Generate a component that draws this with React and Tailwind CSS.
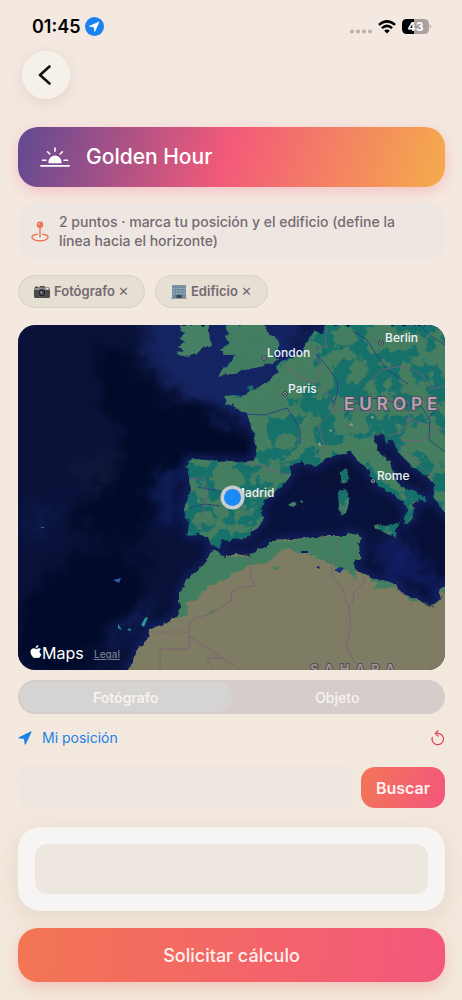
import React, { useState } from 'react'

const EUROPE = 'M325 325L320 334L314 331L309 337L304 345L300 353L290 358L280 361L276 367L278 375L270 381L260 385L253 389L251 385L247 387L250 394L253 396L244 398L237 395L223 396L226 401L224 404L235 406L245 413L250 422L253 433L256 447L253 460L240 463L230 461L217 462L205 460L193 459L186 463L187 472L190 490L183 509L184 517L188 520L187 535L197 534L207 537L210 545L217 548L222 540L230 539L245 538L250 532L257 528L263 517L260 510L263 502L273 493L281 487L290 475L290 467L295 462L305 463L315 467L325 458L332 456L340 451L350 452L358 462L365 467L372 480L380 488L393 494L402 503L407 511L402 523L407 523L413 515L411 505L418 499L424 502L425 498L415 492L405 489L396 482L392 473L388 463L375 453L371 442L374 436L382 434L386 443L391 439L398 453L412 467L425 476L434 484L433 497L440 508L446 514V325Z'
const BRITAIN = 'M228 325L225 329L230 335L224 336L229 343L219 351L224 355L233 355L231 361L222 370L217 377L225 374L232 374L242 370L252 368L263 366L272 363L277 358L273 355L278 347L276 338L268 336L265 330L263 325Z'
const IRELAND = 'M180 325L209 325L208 333L210 345L204 347L195 353L184 357L177 354L184 351L178 347L184 342L178 339L185 333L178 331Z'
const ISLANDS = 'M373 526L377 524L385 526L399 522L395 530L395 538L385 533L374 528ZM337 492L343 488L348 493L348 503L345 513L339 515L338 505ZM340 473L345 469L347 478L343 484L340 479ZM287 505L292 502L296 504L292 507ZM299 502L302 501L302 503Z'
const AFRICA = 'M446 584L438 590L440 598L435 605L428 606L412 598L400 593L397 585L385 581L372 579L362 573L352 568L353 562L360 557L358 550L356 543L360 538L352 532L342 536L325 536L308 538L292 538L280 540L268 543L257 550L248 556L235 554L223 557L215 550L210 551L205 563L193 573L183 583L179 597L180 605L175 617L163 625L148 630L147 640L137 648L133 660L127 672H446Z'
const MAGHREB = 'M210 551L205 563L193 573L183 583L179 597L180 605L175 617L186 617L187 603L197 600L200 592L215 583L226 578L231 573L243 569L250 565L268 562L279 551L288 548L295 553L306 551L315 558L332 565L345 571L358 580L352 568L353 562L360 557L356 543L360 538L352 532L342 536L308 538L268 543L248 556L223 557L215 550ZM362 574L372 579L385 581L397 587L385 588L373 590L376 584ZM404 595L427 604L412 602ZM444 585L440 590L446 596ZM272 566L281 567L273 572ZM207 611L213 610L212 614Z'

const cities = [
  { name: 'London', x: 263, y: 358, tx: 266, ty: 357 },
  { name: 'Paris', x: 284, y: 394, tx: 287, ty: 393 },
  { name: 'Berlin', x: 380, y: 343, tx: 384, ty: 342 },
  { name: 'Rome', x: 372, y: 481, tx: 376, ty: 480 },
]

function StatusBar() {
  return (
    <div className="flex h-9 items-center justify-between pt-[17px] pr-[31px] pl-8">
      <div className="flex items-center gap-1">
        <span className="text-[18px] leading-5 font-semibold text-black">01:45</span>
        <svg className="size-[19px]" viewBox="0 0 19 19">
          <circle cx="9.5" cy="9.5" r="9.5" fill="#1a82f0" />
          <path d="M14 5L4.300 9.300L9.200 9.900L9.700 14.500Z" fill="#fff" stroke="#fff" strokeWidth=".7" strokeLinejoin="round" />
        </svg>
      </div>
      <div className="flex items-center gap-[6px]">
        <svg className="h-4 w-[22px]" viewBox="0 0 22 16" fill="#b9b1ac">
          <circle cx="2" cy="12.500" r="2" />
          <circle cx="8" cy="12.500" r="2" />
          <circle cx="14" cy="12.500" r="2" />
          <circle cx="20" cy="12.500" r="2" />
        </svg>
        <svg className="h-[14px] w-[18px]" viewBox="0 0 18 14" fill="none" stroke="#000" strokeWidth="2.500">
          <path d="M.900 4.900Q9 -2.100 17.100 4.900" />
          <path d="M3.900 8.100Q9 3.700 14.100 8.100" />
          <path d="M9 13.500L6.200 10.700Q9 8.500 11.800 10.700Z" fill="#000" stroke="none" />
        </svg>
        <svg className="h-[15px] w-[29px]" viewBox="0 0 29 15">
          <path d="M12 0H5Q0 0 0 5V10Q0 15 5 15H12Z" fill="#000" />
          <path d="M12 0H22Q27 0 27 5V10Q27 15 22 15H12Z" fill="#aaa29e" />
          <path d="M27.800 5.500Q29 6 29 7.500T27.800 9.500Z" fill="#aaa29e" />
          <text x="13.500" y="12" textAnchor="middle" fill="#fff" className="text-[12px] font-bold">43</text>
        </svg>
      </div>
    </div>
  )
}

function SunriseIcon() {
  return (
    <svg className="h-5 w-[30px] shrink-0" viewBox="0 0 30 20" fill="none" stroke="#fff" strokeWidth="1.600" strokeLinecap="round">
      <path d="M8.500 16.200V15a6.500 6.500 0 0 1 13 0v1.200Z" fill="#fff" stroke="none" />
      <path d="M1 18.800H29" strokeWidth="1.800" />
      <path d="M15 1V4.300M7.600 4.800L9.800 7M22.400 4.800L20.200 7M2.500 13.200H5.900M24.100 13.200H27.500" />
    </svg>
  )
}

function PinIcon() {
  return (
    <svg className="h-[21px] w-[18px] shrink-0" viewBox="0 0 18 21" fill="none" stroke="#ee735b" strokeWidth="1.400" strokeLinecap="round">
      <circle cx="9" cy="3.800" r="3.300" fill="#ee735b" stroke="none" />
      <path d="M9 6V16" />
      <path d="M6.400 13.200C3.200 13.600 1 14.700 1 16.300C1 18.300 4.500 19.800 9 19.800S17 18.300 17 16.300C17 14.700 14.800 13.600 11.600 13.200" />
      <circle cx="8" cy="2.800" r=".9" fill="#f8b9a8" stroke="none" />
    </svg>
  )
}

function CameraIcon() {
  return (
    <svg className="h-4 w-4" viewBox="0 0 16 16">
      <path d="M0 5Q0 3.500 1.500 3.500H5L6.200 2H10.500L11.500 3.500H14.500Q16 3.500 16 5V12.500Q16 14 14.500 14H1.500Q0 14 0 12.500Z" fill="#4b4a49" />
      <path d="M0 4.800Q0 3.500 1.500 3.500H14.500Q16 3.500 16 4.800V6H0Z" fill="#92908d" />
      <rect x="11.800" y="4" width="2.600" height="1.500" fill="#e6e2d8" />
      <rect x="1.200" y="2.600" width="2.500" height="1.400" fill="#35302d" />
      <circle cx="8" cy="9" r="4" fill="#1e1e20" stroke="#777574" strokeWidth=".7" />
      <circle cx="8" cy="9" r="2.300" fill="#4b5360" />
      <circle cx="7.200" cy="8.200" r=".8" fill="#b5becb" />
    </svg>
  )
}

function BuildingIcon() {
  return (
    <svg className="h-4 w-4" viewBox="0 0 16 16">
      <rect x="1" y="1" width="14" height="13" fill="#718d9f" />
      <rect x="1" y="1" width="14" height="1.500" fill="#8795a0" />
      <path d="M1.500 4.500H14.500M1.500 7H14.500M1.500 9.500H14.500" stroke="#8eacbf" strokeWidth="1.200" />
      <path d="M4.500 2.500V14M8 2.500V11M11.500 2.500V14" stroke="#637e90" strokeWidth=".5" />
      <rect x="5.500" y="11" width="5" height="3" fill="#39434b" />
      <rect x="0" y="14" width="16" height="1" fill="#9a9b98" />
    </svg>
  )
}

function ArrowIcon() {
  return (
    <svg className="size-[14px]" viewBox="0 0 14 14">
      <path d="M13.200 .8L.7 6.800L6.500 7.500L7.200 13.300Z" fill="#1a82e8" stroke="#1a82e8" strokeLinejoin="round" />
    </svg>
  )
}

function Chip({ icon, label }) {
  return (
    <button className="flex h-[33px] items-center gap-1 rounded-full border border-[#d6cfc5] bg-[#e5dfd4] px-[15px]">
      {icon}
      <span>
        {label} <span className="font-['DejaVu_Sans',sans-serif] font-normal">✕</span>
      </span>
    </button>
  )
}

function Map() {
  return (
    <svg className="block w-full rounded-[17px]" viewBox="17 325 427 345" role="img" aria-label="Mapa">
      <defs>
        <filter id="soft" x="-10%" y="-10%" width="120%" height="120%" colorInterpolationFilters="sRGB">
          <feGaussianBlur stdDeviation="8" result="b" />
          <feTurbulence type="fractalNoise" baseFrequency=".05" numOctaves="4" seed="7" />
          <feDisplacementMap in="b" scale="34" xChannelSelector="R" yChannelSelector="G" />
        </filter>
        <filter id="shelf" x="-10%" y="-10%" width="120%" height="120%" colorInterpolationFilters="sRGB">
          <feGaussianBlur stdDeviation="4" />
        </filter>
        <filter id="coast" x="0" y="0" width="100%" height="100%" colorInterpolationFilters="sRGB">
          <feTurbulence type="fractalNoise" baseFrequency=".16" numOctaves="3" seed="4" />
          <feDisplacementMap in="SourceGraphic" scale="6" xChannelSelector="R" yChannelSelector="G" />
        </filter>
        {/* patches of lower ground over the teal base */}
        <filter id="patches" x="0" y="0" width="100%" height="100%" colorInterpolationFilters="sRGB">
          <feTurbulence type="fractalNoise" baseFrequency=".06" numOctaves="4" seed="12" />
          <feColorMatrix values="0 0 0 0 .27  0 0 0 0 .49  0 0 0 0 .38  14 0 0 0 -6.600" />
        </filter>
        <clipPath id="land">
          <path d={EUROPE} />
          <path d={BRITAIN} />
          <path d={ISLANDS} />
        </clipPath>
      </defs>

      <rect x="17" y="325" width="427" height="345" fill="#0a123a" />
      <g filter="url(#soft)">
        <path d="M145 315H310L275 400L250 425L210 408L165 385L145 350Z" fill="#142561" />
        <path d="M95 350L120 345L150 395L195 410L245 435L252 456L195 452L175 475L160 535L110 545L70 520L110 460L120 430L100 400Z" fill="#020a29" />
        <path d="M30 590L85 545L150 560L135 600L85 670H17V610Z" fill="#020a2b" />
        <path d="M270 515L300 495L385 500L370 520L290 530Z" fill="#081340" />
        <path d="M155 470L183 465L175 520L150 530Z" fill="#0f1d58" />
        <path d="M365 545L400 540L440 570V595L400 580Z" fill="#131f66" />
        <path d="M405 530L446 515V585L415 565Z" fill="#070f38" />
        <path d="M20 510H60L40 540Z" fill="#0c1c4d" />
        <path d="M75 465L125 445L110 480L80 490Z" fill="#10183c" />
        <path d="M110 625L150 605L145 630L110 640Z" fill="#101f58" />
      </g>
      <g fill="none" stroke="#15266b" strokeWidth="7" filter="url(#shelf)" opacity=".9">
        <path d={EUROPE} />
        <path d={AFRICA} />
        <path d={BRITAIN} />
      </g>

      <g filter="url(#coast)">
        <g fill="#17716b">
          <path d={EUROPE} />
          <path d={BRITAIN} />
          <path d={ISLANDS} />
        </g>
        <path d={IRELAND} fill="#458064" />
        <path d={BRITAIN} fill="#457d61" opacity=".9" />
        <path d={AFRICA} fill="#7e7d64" />
        <path d={MAGHREB} fill="#417f60" />
        <path d="M253 389L270 380L282 363L300 354L306 345L316 352L312 362L316 372L302 392L286 400L291 414L280 420L268 416L264 432L272 444L262 452L256 447L253 433L245 413L228 404L226 397L240 398ZM330 331L350 326L358 341L344 345L335 343ZM365 328L395 328L408 345L392 352L378 343ZM300 424L309 410L311 425L304 448L296 460L280 462L296 448ZM328 449L351 438L373 438L377 451L389 463L394 482L405 491L395 492L378 478L365 457L350 451L340 455ZM397 439L417 423L435 422L444 440V465L421 453ZM192 514L209 511L215 520L205 525L192 519ZM212 472L235 468L245 480L236 494L215 490Z" fill="#467e60" />
      </g>
      <g clipPath="url(#land)">
        <rect x="160" y="325" width="284" height="240" filter="url(#patches)" />
      </g>

      <g fill="#315caa">
        <path d="M333 570L339 567L343 568L339 573Z" fill="#15318a" />
        <path d="M300 551H307V553H300ZM315 567L318 566L319 569Z" fill="#0d1a5c" />
        <path d="M40 527H43V528H40ZM112 580L120 578L118 583Z" />
      </g>
      <path d="M117 624L121 630L117 628ZM126 630L129 628L130 631ZM140 625L144 618L147 617L143 627Z" fill="#279a94" />

      <g fill="none" stroke="#273f83" strokeWidth=".9">
        <path d="M315 354L325 365L337 382L336 394L332 408" />
        <path d="M352 405L366 398L381 399L400 404L420 406L429 420L428 440L444 452" />
        <path d="M246 414L264 415L286 408L292 417L299 430L299 444" />
        <path d="M352 331L366 340L385 369L407 384" />
        <path d="M189 508L203 504L219 506M196 487L220 491" />
        <path d="M419 325L430 336L444 345M424 421L432 413" />
      </g>
      <g fill="none" stroke="#7d5c7a" strokeWidth=".9" opacity=".9">
        <path d="M326 328L324 346L313 350L320 368L316 382L335 402L330 412L318 425L321 439L325 451" />
        <path d="M282 363L300 378L315 383M331 411L348 409L374 412L389 401L407 401L409 415L401 432L386 436" />
        <path d="M370 383L379 370L401 366L421 374L430 389L444 386M406 418L427 425L444 430M399 440L421 441L435 430M397 444L417 464L433 478" />
        <path d="M246 462L263 467L288 475" />
        <path d="M203 477L206 488L202 510L199 530M188 480L204 478" />
        <path d="M335 537L337 553L330 567L333 578L341 588L347 606L350 625L345 647L353 661L360 670" />
        <path d="M347 607L352 602L353 592L364 582L363 576" />
        <path d="M248 556L250 576L254 586L238 588L230 592L231 600L218 609L207 615L193 618L188 625V648" />
        <path d="M188 632H148" strokeDasharray="2 1" />
        <path d="M188 636L239 670M159 670V649H188M213 670L206 658H222" />
      </g>
      <path d="M328 431l2-2 1 3zM348 425l3-2 1 3zM369 417l3-1 1 3zM317 445l2-3 1 4z" fill="#a89a8b" />

      {cities.map((city) => (
        <g key={city.name}>
          <circle cx={city.x} cy={city.y} r="2.200" fill="#dde5ea" stroke="#17202b" strokeWidth="1" />
          <circle cx={city.x} cy={city.y} r="1" fill="#17202b" />
          <text x={city.tx} y={city.ty} fill="#eef2f6" className="text-[12px] font-medium">{city.name}</text>
        </g>
      ))}
      <text x="233" y="497" fill="#eef2f6" className="text-[12px] font-medium">Madrid</text>
      <g fill="#b9a2b1" stroke="#514e60" strokeWidth="2" paintOrder="stroke" className="font-semibold">
        <text x="343" y="410" className="text-[17px] tracking-[5px]">EUROPE</text>
        <text x="309" y="674" fill="#a9958b" className="text-[13px] tracking-[6px]">SAHARA</text>
      </g>

      <circle cx="231.500" cy="497.500" r="12" fill="#c9cdd3" />
      <circle cx="231.500" cy="497.500" r="8.500" fill="#1b8af5" />

      <g transform="translate(29 645)" fill="#fff">
        <path d="M8.200 3.500C9.400 2.800 10.500 3.500 11 4.200C8.900 5.500 9.200 8.300 11.400 9.200C10.800 11 9.600 13.200 8.100 13C7.100 12.700 6.500 12.400 5.400 12.900C4.100 13.500 3 12.500 2 11.100C.3 8.700-.1 5.700 1.500 4.200C2.800 3 4.300 3.300 5.500 3.800C6.500 4.100 7.200 3.900 8.200 3.500Z" />
        <path d="M8.400 0C8.400 1.700 7.200 3.200 5.600 3.100C5.500 1.500 6.800 .2 8.400 0Z" />
      </g>
      <text x="41" y="659" fill="#fff" className="text-[16px]">Maps</text>
      <a href="#legal">
        <text x="93" y="658" fill="#777b90" className="text-[10px] font-medium underline">Legal</text>
      </a>
    </svg>
  )
}

export default function App() {
  const [target, setTarget] = useState('photographer')
  const [query, setQuery] = useState('')
  const [name, setName] = useState('')

  return (
    <div className="min-h-screen bg-linear-to-b from-[#f4e9e1] to-[#f3e8dc] font-['Inter','Liberation_Sans',sans-serif]">
      <StatusBar />
      <main className="flex flex-col pt-[15px] pr-[17px] pb-[18px] pl-[18px]">
        <button
          aria-label="Volver"
          className="ml-1 flex size-12 items-center justify-center rounded-full border border-[#faf4ed] bg-[#f5f0e9] text-black shadow-[0_4px_16px_rgba(100,70,50,0.12)]"
        >
          <svg className="mr-1 h-5 w-[13px]" viewBox="0 0 13 20" fill="none" stroke="#15100d" strokeWidth="2.600" strokeLinecap="round" strokeLinejoin="round">
            <path d="M11.500 1.500L2 10L11.500 18.500" />
          </svg>
        </button>

        <header className="mt-7 flex h-[60px] items-center gap-4 rounded-[20px] bg-linear-[105deg,#674a91_2%,#f35a79_49%,#f4a94d_98%] px-[22px] text-white shadow-[0_4px_14px_rgba(243,90,121,0.28)]">
          <SunriseIcon />
          <h1 className="text-[21px] leading-7 font-medium">Golden Hour</h1>
        </header>

        <section className="mt-[17px] flex items-center gap-[10px] rounded-[14px] bg-[#eee7e1] py-2 pr-9 pl-[13px]">
          <PinIcon />
          <p className="text-[14px] leading-[19px] font-medium text-[#746a71]">
            2 puntos · marca tu posición y el edificio (define la línea hacia el horizonte)
          </p>
        </section>

        <div className="mt-[17px] flex gap-[10px] text-[13px] font-semibold text-[#736971]">
          <Chip icon={<CameraIcon />} label="Fotógrafo" />
          <Chip icon={<BuildingIcon />} label="Edificio" />
        </div>

        <div className="mt-[17px]">
          <Map />
        </div>

        <div className="mt-[10px] grid h-[34px] grid-cols-2 rounded-full bg-[#d5cdca] p-[2px] text-[14px] text-[#f6f3f1]">
          <button
            onClick={() => setTarget('photographer')}
            className={target === 'photographer' ? 'rounded-full bg-[#d6d4d2] font-semibold' : 'rounded-full font-medium'}
          >
            Fotógrafo
          </button>
          <button
            onClick={() => setTarget('object')}
            className={target === 'object' ? 'rounded-full bg-[#d6d4d2] font-semibold' : 'rounded-full font-medium'}
          >
            Objeto
          </button>
        </div>

        <div className="mt-[14px] flex h-5 items-center justify-between">
          <button className="flex items-center gap-[10px] text-[14px] leading-5 text-[#1a82e8]">
            <ArrowIcon />
            Mi posición
          </button>
          <button aria-label="Restablecer">
            <svg className="h-4 w-[14px]" viewBox="0 0 14 16" fill="none" stroke="#e0485e" strokeWidth="1.300" strokeLinecap="round" strokeLinejoin="round">
              <path d="M1.300 7.400A5.700 5.700 0 1 0 6.800 3.300H4.500" />
              <path d="M7 .8L4.300 3.400L7 6" />
            </svg>
          </button>
        </div>

        <form className="mt-[17px] flex items-center gap-2" onSubmit={(e) => e.preventDefault()}>
          <input
            aria-label="Buscar lugar"
            value={query}
            onChange={(e) => setQuery(e.target.value)}
            className="h-[45px] min-w-0 flex-1 rounded-[14px] bg-[#eee6df] px-3 text-[15px] outline-none"
          />
          <button className="h-[41px] w-[84px] rounded-[14px] bg-linear-[105deg,#f37558,#f3577c] text-[16px] font-semibold text-[#fff1ed]">
            Buscar
          </button>
        </form>

        <section className="mt-[17px] rounded-[22px] bg-[#f6f5f4] p-[17px] shadow-[0_6px_20px_rgba(110,80,60,0.11)]">
          <input
            aria-label="Nombre"
            value={name}
            onChange={(e) => setName(e.target.value)}
            className="block h-[50px] w-full rounded-[12px] bg-[#eee7df] px-3 text-[15px] outline-none"
          />
        </section>

        <button className="mt-[17px] h-[54px] rounded-[20px] bg-linear-[95deg,#f37653,#f3577b] text-[18px] font-medium text-[#fff1ed] shadow-[0_6px_14px_rgba(243,100,90,0.25)]">
          Solicitar cálculo
        </button>
      </main>
    </div>
  )
}
